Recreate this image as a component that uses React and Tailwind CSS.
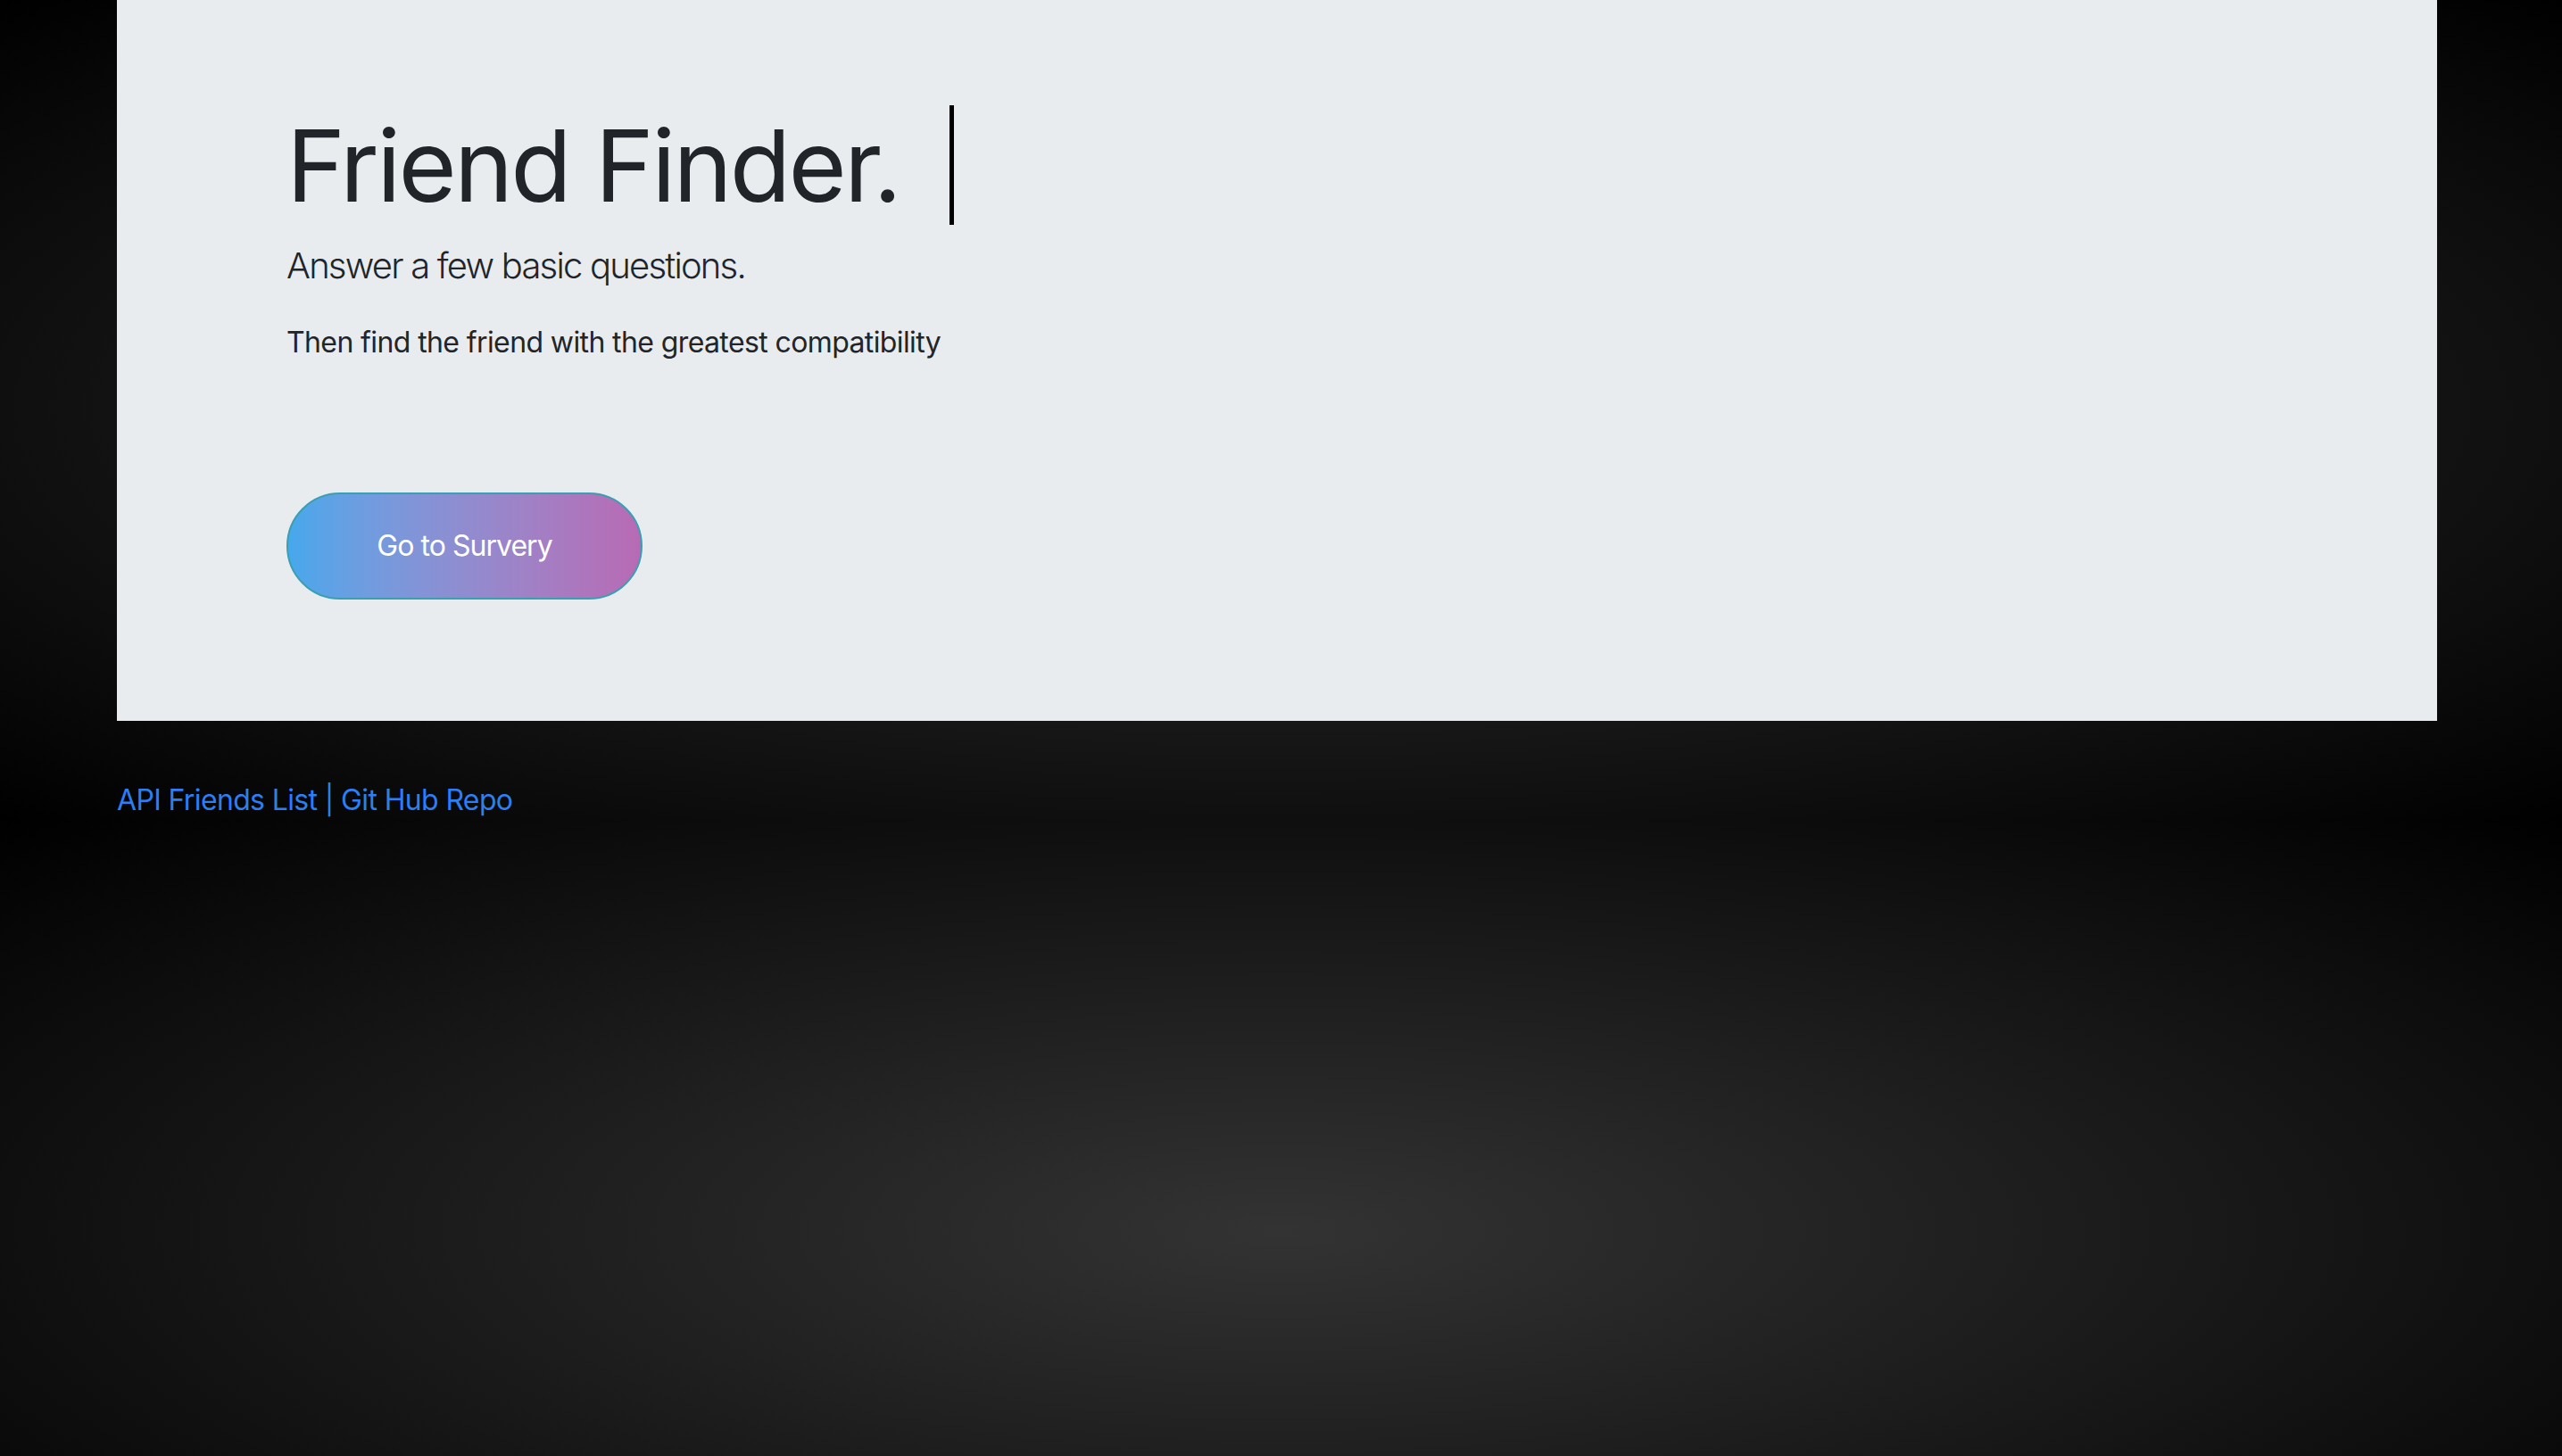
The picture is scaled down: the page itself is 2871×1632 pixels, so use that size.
import React from "react";

export default function App() {
  return (
    <div className="min-h-screen w-full bg-[radial-gradient(ellipse_at_center,#333333_0%,#000000_100%)] bg-[length:100%_920px] bg-repeat font-[Inter,sans-serif]">
      <div className="ml-[131px] w-[2600px]">
        <div className="h-[808px] bg-[#e9ecef] pl-[190px] pt-[118px]">
          <h1 className="m-0 text-[112px] leading-[1.2] font-normal tracking-[-0.025em] text-[#212529] whitespace-nowrap">
            Friend Finder.
            <span className="ml-[56px] inline-block h-[134px] w-[5px] bg-black align-top"></span>
          </h1>
          <p className="mt-[16px] text-[40px] leading-[1.5] font-light tracking-[-0.045em] text-[#212529]">
            Answer a few basic questions.
          </p>
          <p className="mt-[32px] text-[32px] leading-[1.5] tracking-[-0.019em] text-[#212529]">
            Then find the friend with the greatest compatibility
          </p>
          <a
            href="#"
            className="mt-[144px] flex h-[120px] w-[399px] items-center justify-center rounded-full border-2 border-[#3a9fb0] bg-gradient-to-r from-[#45a8ec] to-[#b86ab4] text-[32px] leading-[1.5] tracking-[-0.03em] text-white"
          >
            Go to Survery
          </a>
        </div>
        <div className="mt-[65px] text-[32px] leading-[1.5] tracking-[-0.02em] text-[#2b7ff3]">
          <a href="#">API Friends List</a> | <a href="#">Git Hub Repo</a>
        </div>
      </div>
    </div>
  );
}
